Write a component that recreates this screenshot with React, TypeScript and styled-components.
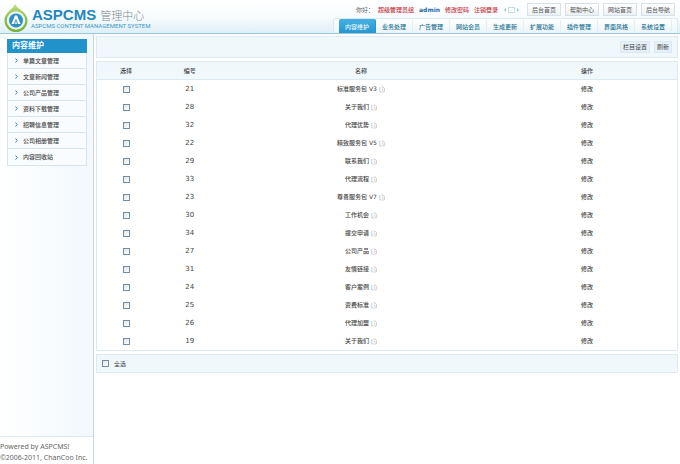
import React, { useState } from "react";
import styled, { createGlobalStyle } from "styled-components";

const Global = createGlobalStyle`
  *, *::before, *::after { box-sizing: border-box; }
  html, body, #root { height: 100%; margin: 0; }
  body {
    background: #fff;
    color: #444;
    font: 6px/10px "DejaVu Sans", "Noto Sans CJK SC", sans-serif;
  }
  a { color: inherit; text-decoration: none; }
  button { font: inherit; color: inherit; cursor: pointer; }
`;

const Page = styled.div`
  min-height: 100vh;
  display: flex;
  flex-direction: column;
`;

const Header = styled.header`
  height: 34px;
  display: flex;
  justify-content: space-between;
  background: linear-gradient(#ffffff, #f8fcfe 50%, #deeff7);
  border-bottom: 1px solid #9cc7da;
`;

const Brand = styled.a`
  display: flex;
  align-items: center;
  gap: 2px;
  padding-left: 3px;
`;

const BrandText = styled.span`
  display: flex;
  flex-direction: column;
  padding-top: 4px;
`;

const BrandLine = styled.span`
  display: flex;
  align-items: center;
  gap: 4px;
  height: 14px;
  padding-left: 1px;
  color: #7f8a92;
  font: 300 11px/14px "Noto Sans CJK SC", sans-serif;
`;

const BrandName = styled.strong`
  color: #2288bd;
  font: bold 15px/14px "Liberation Sans", sans-serif;
`;

const BrandSub = styled.span`
  color: #3b98c8;
  font: 6px/8px Roboto, "Liberation Sans", sans-serif;
`;

const Tools = styled.div`
  display: flex;
  flex-direction: column;
  justify-content: space-between;
  align-items: flex-end;
`;

const UserBar = styled.div`
  display: flex;
  align-items: center;
  padding: 3px 5px 0 0;
  height: 16px;
`;

const Greeting = styled.span`
  color: #666;
  margin-right: 4px;
`;

const UserLink = styled.a<{ $admin?: boolean }>`
  color: ${(p) => (p.$admin ? "#1b66a8" : "#c8323c")};
  font-weight: ${(p) => (p.$admin ? "bold" : "500")};
  margin-right: 5px;
`;

const Pager = styled.span`
  display: flex;
  margin-right: 7px;
`;

const TopButtons = styled.div`
  display: flex;
  gap: 4px;
`;

const TopButton = styled.button`
  width: 34px;
  height: 13px;
  padding: 0;
  border: 1px solid #d9e1e8;
  background: linear-gradient(#ffffff, #edf1f5);
  color: #555;
  line-height: 10px;
`;

const Nav = styled.nav`
  display: flex;
  height: 15px;
  margin-right: 2px;
  padding: 0 5px;
  border: 1px solid #dbe9f0;
  border-bottom: 0;
  border-radius: 3px 3px 0 0;
  background: linear-gradient(#ffffff, #eaf4f9);
`;

const NavItem = styled.a<{ $active?: boolean }>`
  width: 37px;
  text-align: center;
  line-height: 15px;
  font-weight: 500;
  color: ${(p) => (p.$active ? "#e6f6ff" : "#267491")};
  background: ${(p) => (p.$active ? "linear-gradient(#45b0e2, #2796cf)" : "none")};
  border-radius: 2px 2px 0 0;
  border-right: 1px solid ${(p) => (p.$active ? "#2796cf" : "#e4eef3")};
`;

const Body = styled.div`
  flex: 1;
  display: flex;
`;

const Sidebar = styled.aside`
  width: 94px;
  flex: none;
  display: flex;
  flex-direction: column;
  justify-content: space-between;
  border-right: 1px solid #c6d9e8;
  background: linear-gradient(90deg, #ffffff, #f2f8fd);
`;

const Menu = styled.nav`
  margin: 5px 6px 0 7px;
  border: 1px solid #d5e4ed;
  border-top: 0;
`;

const MenuTitle = styled.h2`
  margin: 0 -1px;
  padding-left: 5px;
  color: #fff;
  background: #2292cb;
  font-size: 8px;
  line-height: 14px;
`;

const MenuItem = styled.a`
  display: flex;
  align-items: center;
  gap: 5px;
  height: 16px;
  padding-left: 7px;
  border-bottom: 1px solid #d5e4ed;
  background: #f9fcfe;
  font-weight: 500;
  &:last-child { border-bottom: 0; }
`;

const Copyright = styled.footer`
  padding: 4px 0 1px;
  border-top: 1px solid #dfeaf1;
  background: #fff;
  color: #666;
  font: 7px/11px "Noto Sans", sans-serif;
  white-space: nowrap;
`;

const Main = styled.main`
  flex: 1;
  display: flex;
  flex-direction: column;
  gap: 3px;
  padding: 2px 2px 0;
`;

const Panel = styled.div<{ $end?: boolean }>`
  display: flex;
  align-items: center;
  justify-content: ${(p) => (p.$end ? "flex-end" : "flex-start")};
  gap: 4px;
  height: ${(p) => (p.$end ? "22px" : "19px")};
  padding: 0 5px;
  border: 1px solid #dcebf3;
  background: #f0f8fc;
`;

const SmallButton = styled.button`
  height: 12px;
  padding: 0 2px;
  border: 1px solid #dce9f4;
  background: #e5f0f8;
  line-height: 10px;
`;

const Table = styled.table`
  width: 100%;
  table-layout: fixed;
  border-collapse: separate;
  border-spacing: 0;
  border: 1px solid #dcebf3;
  text-align: center;
`;

const Th = styled.th<{ $w: string }>`
  width: ${(p) => p.$w};
  height: 18px;
  padding: 0;
  background: #f0f8fc;
  border-bottom: 1px solid #dcebf3;
  font-weight: 500;
`;

const Td = styled.td<{ $num?: boolean }>`
  height: 18px;
  padding: 0;
  line-height: 10px;
  font-weight: 500;
  font-size: ${(p) => (p.$num ? "7px" : "6px")};
`;

const Name = styled.span`
  display: inline-flex;
  align-items: center;
  gap: 2px;
`;

const Check = styled.input`
  appearance: none;
  display: block;
  width: 7px;
  height: 7px;
  margin: 0 auto;
  border: 1px solid #718ea5;
  background: linear-gradient(135deg, #dfe3e6, #ffffff);
  &:checked { background: #2292cb; }
`;

const AllLabel = styled.label`
  display: flex;
  align-items: center;
  gap: 5px;
`;

const Logo = () => (
  <svg width="26" height="32" viewBox="0 0 26 32" aria-hidden="true">
    <defs>
      <linearGradient id="leaf" x1="0" y1="0" x2="0" y2="1">
        <stop offset="0" stopColor="#c5df83" />
        <stop offset="0.5" stopColor="#8cbf43" />
        <stop offset="1" stopColor="#78b03a" />
      </linearGradient>
    </defs>
    <path d="M12 3C14 8 24.500 11 24.500 19.500a11.500 11.500 0 0 1-23 0C1.500 11 10 9 12 3Z" fill="url(#leaf)" />
    <circle cx="13" cy="19.500" r="9.300" fill="#e8f4f7" />
    <circle cx="13" cy="19.500" r="7" fill="#338fc0" />
    <path d="M8.500 23 12 14.500h2l3.500 8.500h-2.300L13 17.500 10.800 23Z" fill="#fff" />
    <path d="m11.500 23 1.500-3 1.500 3Z" fill="#cfe9f5" />
  </svg>
);

const NoteIcon = () => (
  <svg width="6" height="7" viewBox="0 0 6 7" fill="none" stroke="#b8b8b8" strokeWidth="0.7" aria-hidden="true">
    <path d="M.8 1v5h2M2.500 1h1.800L5.300 2.200V6H3.500M3 3.200h1M3.300 4.500h.8" />
  </svg>
);

const Chevron = () => (
  <svg width="3" height="5" viewBox="0 0 3 5" fill="none" stroke="#3d86b0" strokeWidth="1" aria-hidden="true">
    <path d="m.5.5 1.800 2-1.800 2" />
  </svg>
);

const tabs = ["内容维护", "业务处理", "广告管理", "网站会员", "生成更新", "扩展功能", "插件管理", "界面风格", "系统设置"];
const shortcuts = ["后台首页", "帮助中心", "网站首页", "后台导航"];
const menu = ["单篇文章管理", "文章新闻管理", "公司产品管理", "资料下载管理", "招聘信息管理", "公司相册管理", "内容回收站"];
const rows: [number, string][] = [
  [21, "标准服务包 V3"], [28, "关于我们"], [32, "代理优势"], [22, "精致服务包 V5"], [29, "联系我们"],
  [33, "代理流程"], [23, "尊贵服务包 V7"], [30, "工作机会"], [34, "提交申请"], [27, "公司产品"],
  [31, "友情链接"], [24, "客户案例"], [25, "资费标准"], [26, "代理加盟"], [19, "关于我们"],
];

export default function App() {
  const [picked, setPicked] = useState<number[]>([]);
  const toggle = (id: number) =>
    setPicked((p) => (p.includes(id) ? p.filter((x) => x !== id) : [...p, id]));
  const all = picked.length === rows.length;

  return (
    <Page lang="zh-CN">
      <Global />
      <Header>
        <Brand href="#">
          <Logo />
          <BrandText>
            <BrandLine><BrandName>ASPCMS</BrandName>管理中心</BrandLine>
            <BrandSub>ASPCMS CONTENT MANAGEMENT SYSTEM</BrandSub>
          </BrandText>
        </Brand>
        <Tools>
          <UserBar>
            <Greeting>你好：</Greeting>
            <UserLink href="#">超级管理员组</UserLink>
            <UserLink href="#" $admin>admin</UserLink>
            <UserLink href="#">修改密码</UserLink>
            <UserLink href="#">注销登录</UserLink>
            <Pager>
              <svg width="17" height="8" viewBox="0 0 17 8" aria-hidden="true">
                <path d="M3 2v4L1 4ZM14 2v4l2-2Z" fill="#8ed0bd" />
                <rect x="5.500" y="1.500" width="6" height="5" fill="#fff" stroke="#c5dbe5" />
              </svg>
            </Pager>
            <TopButtons>
              {shortcuts.map((s) => <TopButton key={s}>{s}</TopButton>)}
            </TopButtons>
          </UserBar>
          <Nav>
            {tabs.map((t, i) => <NavItem key={t} href="#" $active={i === 0}>{t}</NavItem>)}
          </Nav>
        </Tools>
      </Header>
      <Body>
        <Sidebar>
          <Menu>
            <MenuTitle>内容维护</MenuTitle>
            {menu.map((m) => <MenuItem key={m} href="#"><Chevron />{m}</MenuItem>)}
          </Menu>
          <Copyright>
            <div>Powered by ASPCMS!</div>
            <div>©2006-2011, ChanCoo Inc.</div>
          </Copyright>
        </Sidebar>
        <Main>
          <Panel $end>
            <SmallButton>栏目设置</SmallButton>
            <SmallButton>刷新</SmallButton>
          </Panel>
          <Table>
            <thead>
              <tr>
                <Th $w="10%">选择</Th>
                <Th $w="12%">编号</Th>
                <Th $w="47%">名称</Th>
                <Th $w="31%">操作</Th>
              </tr>
            </thead>
            <tbody>
              {rows.map(([id, name]) => (
                <tr key={id}>
                  <Td>
                    <Check type="checkbox" aria-label={name} checked={picked.includes(id)} onChange={() => toggle(id)} />
                  </Td>
                  <Td $num>{id}</Td>
                  <Td><Name><a href="#">{name}</a><NoteIcon /></Name></Td>
                  <Td><a href="#">修改</a></Td>
                </tr>
              ))}
            </tbody>
          </Table>
          <Panel>
            <AllLabel>
              <Check type="checkbox" checked={all} onChange={() => setPicked(all ? [] : rows.map((r) => r[0]))} />
              全选
            </AllLabel>
          </Panel>
        </Main>
      </Body>
    </Page>
  );
}
